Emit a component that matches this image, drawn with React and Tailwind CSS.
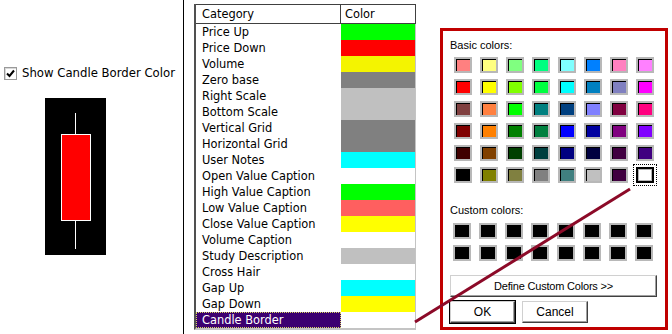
import React from "react";

const rows = [
    ["Price Up", "#00ff00"],
    ["Price Down", "#ff0000"],
    ["Volume", "#f4f400"],
    ["Zero base", "#808080"],
    ["Right Scale", "#c0c0c0"],
    ["Bottom Scale", "#c0c0c0"],
    ["Vertical Grid", "#808080"],
    ["Horizontal Grid", "#808080"],
    ["User Notes", "#00ffff"],
    ["Open Value Caption", "#ffffff"],
    ["High Value Caption", "#00ff00"],
    ["Low Value Caption", "#ff5f5f"],
    ["Close Value Caption", "#ffff00"],
    ["Volume Caption", "#ffffff"],
    ["Study Description", "#c0c0c0"],
    ["Cross Hair", "#ffffff"],
    ["Gap Up", "#00ffff"],
    ["Gap Down", "#ffff00"],
    ["Candle Border", "#ffffff"],
];

// windows standard palette
const basic = [
    "#ff8080", "#ffff80", "#80ff80", "#00ff80", "#80ffff", "#0080ff", "#ff80c0", "#ff80ff",
    "#ff0000", "#ffff00", "#80ff00", "#00ff40", "#00ffff", "#0080c0", "#8080c0", "#ff00ff",
    "#804040", "#ff8040", "#00ff00", "#008080", "#004080", "#8080ff", "#800040", "#ff0080",
    "#800000", "#ff8000", "#008000", "#008040", "#0000ff", "#0000a0", "#800080", "#8000ff",
    "#400000", "#804000", "#004000", "#004040", "#000080", "#000040", "#400040", "#400080",
    "#000000", "#808000", "#808040", "#808080", "#408080", "#c0c0c0", "#400040", "#ffffff",
];

const Swatch = ({ color, selected }) => {
    if (selected) {
        return (
            <div className="w-[18px] h-[16px] outline-1 outline-dotted outline-black outline-offset-[2px] border-2 border-black">
                <div className="h-full border border-[#b4b4b4]" style={{ background: color }} />
            </div>
        );
    }
    return (
        <div className="w-[18px] h-[16px] border-2 border-[#b8b8b8]">
            <div className="h-full border-t border-l border-black" style={{ background: color }} />
        </div>
    );
};

const btn =
    "flex items-center justify-center h-[22px] bg-white border border-t-[#d0d0d0] border-l-[#d0d0d0] border-r-[#404040] border-b-[#404040] shadow-[inset_-1px_-1px_0_#a0a0a0]";

export default function App() {
    return (
        <div className="relative flex w-[672px] h-[334px] bg-white overflow-hidden text-black font-['DejaVu_Sans',sans-serif]">
            {/* left: preview */}
            <div className="w-[184px] shrink-0 border-r border-black pt-[67px] pl-[4px]">
                <div className="flex items-center gap-[5px] h-[13px]">
                    <div className="w-[13px] h-[13px] border border-[#9a9a9a] bg-white flex items-center justify-center shadow-[inset_1px_1px_0_#d8d8d8]">
                        <svg width="9" height="9" viewBox="0 0 9 9">
                            <path d="M1 4.5 L3.5 7 L8 1.5" fill="none" stroke="#000" strokeWidth="2" />
                        </svg>
                    </div>
                    <span className="text-[11.7px] leading-[13px] whitespace-nowrap">Show Candle Border Color</span>
                </div>
                <div className="ml-[41px] mt-[18px] w-[61px] h-[157px] bg-black flex flex-col items-center pt-[15px]">
                    <div className="w-px h-[21px] bg-white" />
                    <div className="w-[30px] h-[87px] bg-[#ff0000] border border-white" />
                    <div className="w-px h-[28px] bg-white" />
                </div>
            </div>

            {/* category table */}
            <div className="ml-[10px] mt-[4px] w-[222px] h-[326px] shrink-0 flex flex-col border-l-2 border-l-[#505050] border-b-2 border-b-[#c4c4c4] text-[11.4px]">
                <div className="flex h-[20px] shrink-0">
                    <div className="w-[145px] border-t border-b border-r border-[#404040] pl-[6px] leading-[19px]">Category</div>
                    <div className="w-[75px] border-t border-b border-r border-[#404040] pl-[4px] leading-[19px]">Color</div>
                </div>
                {rows.map(([name, color], i) => {
                    const sel = i === rows.length - 1;
                    return (
                        <div key={name} className="flex h-[16px] shrink-0 border-r border-[#c4c4c4]">
                            <div
                                className={
                                    sel
                                        ? "w-[145px] pl-[6px] leading-[17px] bg-[#3c0070] text-white outline-1 outline-dotted outline-[#d8d860] -outline-offset-1"
                                        : "w-[145px] pl-[6px] leading-[17px]"
                                }
                            >
                                {name}
                            </div>
                            <div className="w-[74px]" style={{ background: color }} />
                        </div>
                    );
                })}
            </div>

            {/* color dialog */}
            <div className="ml-[24px] mt-[28px] w-[228px] h-[302px] shrink-0 border-[3px] border-[#c00000] pl-[7px] pt-[8px] font-['Liberation_Sans',sans-serif] text-[11px]">
                <div className="leading-[13px]">Basic colors:</div>
                <div className="ml-[4px] mt-[5px] grid grid-cols-[repeat(8,18px)] gap-x-[8px] gap-y-[6px]">
                    {basic.map((c, i) => (
                        <Swatch key={i} color={c} selected={i === basic.length - 1} />
                    ))}
                </div>
                <div className="mt-[21px] leading-[13px]">Custom colors:</div>
                <div className="ml-[3px] mt-[6px] grid grid-cols-[repeat(8,18px)] gap-x-[8px] gap-y-[6px]">
                    {Array.from({ length: 16 }).map((_, i) => (
                        <Swatch key={i} color="#000000" />
                    ))}
                </div>
                <div className={`${btn} mt-[14px] w-[207px] tracking-[-0.2px]`}>Define Custom Colors &gt;&gt;</div>
                <div className="mt-[4px] flex gap-[7px]">
                    <div className={`${btn} w-[65px] border-black outline outline-black text-[12px]`}>OK</div>
                    <div className={`${btn} w-[66px] text-[12px]`}>Cancel</div>
                </div>
            </div>

            {/* pointer line */}
            <svg className="absolute inset-0 pointer-events-none" width="672" height="334">
                <line x1="415" y1="322" x2="630" y2="189" stroke="#8c0a28" strokeWidth="3" />
            </svg>
        </div>
    );
}
